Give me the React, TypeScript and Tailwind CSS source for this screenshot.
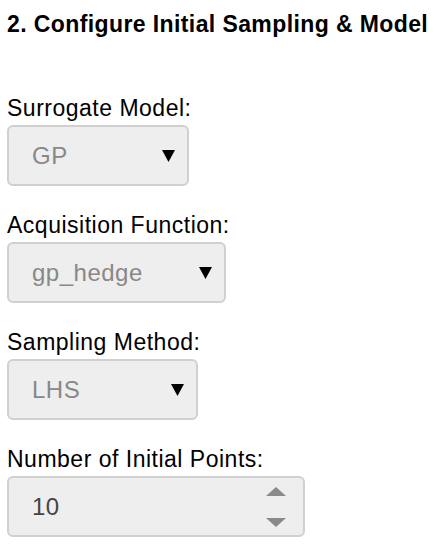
import { useState } from "react";

function SelectField({ label, value, width }: { label: string; value: string; width: string }) {
  return (
    <div className="mb-[26px]">
      <label className="block text-[23px] leading-[26px] tracking-[0.5px] text-black mb-[4px]">{label}</label>
      <div
        className={`flex items-center justify-between h-[61px] ${width} rounded-[6px] border-2 border-[#d0d0d0] bg-[#eeeeee] pl-[23px] pr-[12px]`}
      >
        <span className="text-[24px] tracking-[0.5px] text-[#888888]">{value}</span>
        <svg width="13" height="12" viewBox="0 0 13 12">
          <polygon points="0,0 13,0 6.5,12" fill="#000" />
        </svg>
      </div>
    </div>
  );
}

export default function App() {
  const [points] = useState(10);

  return (
    <div className="px-[7px] pt-[11px] font-['Liberation_Sans',Arial,sans-serif] text-black">
      <h3 className="text-[23px] font-bold leading-[26px] tracking-[0.4px] mb-[58px]">
        2. Configure Initial Sampling &amp; Model
      </h3>

      <SelectField label="Surrogate Model:" value="GP" width="w-[182px]" />
      <SelectField label="Acquisition Function:" value="gp_hedge" width="w-[219px]" />
      <SelectField label="Sampling Method:" value="LHS" width="w-[191px]" />

      {/* Number input */}
      <div>
        <label className="block text-[23px] leading-[26px] tracking-[0.5px] text-black mb-[4px]">
          Number of Initial Points:
        </label>
        <div className="flex items-center justify-between h-[61px] w-[298px] rounded-[6px] border-2 border-[#d0d0d0] bg-[#eeeeee] pl-[23px] pr-[17px]">
          <span className="text-[24px] tracking-[0.5px] text-[#444444]">{points}</span>
          <div className="flex flex-col gap-[22px]">
            <svg width="20" height="9" viewBox="0 0 20 9">
              <polygon points="10,0 20,9 0,9" fill="#8a8a8a" />
            </svg>
            <svg width="20" height="9" viewBox="0 0 20 9">
              <polygon points="0,0 20,0 10,9" fill="#8a8a8a" />
            </svg>
          </div>
        </div>
      </div>
    </div>
  );
}
